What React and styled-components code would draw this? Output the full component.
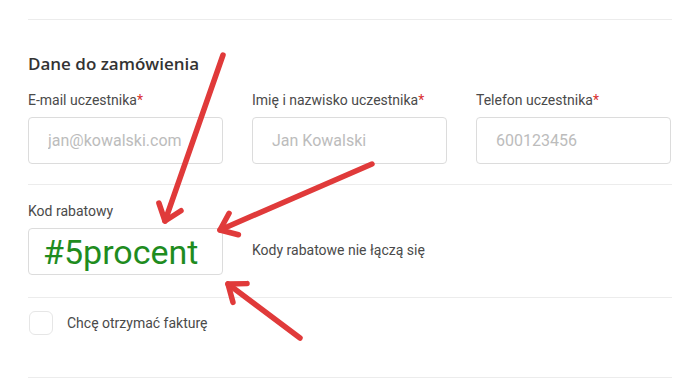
import React from "react";
import styled, { createGlobalStyle } from "styled-components";

const Global = createGlobalStyle`
  html, body { margin: 0; padding: 0; background: #fff; }
  body { font-family: Roboto, "Liberation Sans", sans-serif; color: #444; }
  * { box-sizing: border-box; }
`;

const Page = styled.div`
  position: relative;
  width: 700px;
  height: 390px;
  overflow: hidden;
  padding: 19px 28px 0 28px;
`;

const Divider = styled.div`
  height: 1px;
  background: #ececec;
  width: 644px;
`;

const Heading = styled.h2`
  margin: 33px 0 0 0;
  font-family: "Open Sans", "Liberation Sans", sans-serif;
  font-weight: 600;
  font-size: 17px;
  line-height: 22px;
  color: #333;
`;

const FieldGrid = styled.div`
  display: grid;
  grid-template-columns: repeat(3, 195px);
  column-gap: 29px;
  margin-top: 16px;
  margin-bottom: 20px;
`;

const Field = styled.div`
  display: flex;
  flex-direction: column;
`;

const Label = styled.label`
  font-size: 14px;
  line-height: 18px;
  color: #4a4a4a;
  margin-bottom: 8px;
`;

const Req = styled.span`
  color: #d9302f;
`;

const Input = styled.input`
  width: 195px;
  height: 47px;
  border: 1px solid #dcdcdc;
  border-radius: 4px;
  padding: ${(p) => (p.$big ? "0 0 0 14px" : "0 19px")};
  font-family: Roboto, "Liberation Sans", sans-serif;
  font-size: ${(p) => (p.$big ? "34px" : "16px")};
  color: ${(p) => (p.$big ? "#1f8c1f" : "#444")};
  background: #fff;
  outline: none;
  &::placeholder { color: #bcbcbc; }
`;

const DiscountSection = styled.div`
  margin-top: 17px;
  margin-bottom: 22px;
  display: flex;
  flex-direction: column;
`;

const DiscountRow = styled.div`
  display: flex;
  align-items: center;
  gap: 29px;
`;

const Note = styled.span`
  font-size: 14px;
  color: #4a4a4a;
  margin-top: -4px;
`;

const CheckRow = styled.label`
  display: flex;
  align-items: flex-start;
  gap: 14px;
  padding-top: 13px;
  height: 79px;
`;

const Box = styled.span`
  width: 24px;
  height: 24px;
  margin-left: 1px;
  border: 1px solid #e6e6e6;
  border-radius: 6px;
  background: #fff;
`;

const CheckText = styled.span`
  font-size: 14px;
  line-height: 24px;
  color: #4a4a4a;
`;

const Overlay = styled.svg`
  position: absolute;
  left: 0;
  top: 0;
  pointer-events: none;
`;

function Arrow({ x1, y1, x2, y2, len = 19, ang = 38 }) {
  const a = Math.atan2(y1 - y2, x1 - x2);
  const r = (ang * Math.PI) / 180;
  const p1 = [x2 + len * Math.cos(a + r), y2 + len * Math.sin(a + r)];
  const p2 = [x2 + len * Math.cos(a - r), y2 + len * Math.sin(a - r)];
  return (
    <g stroke="#e03a3a" strokeWidth="5.5" strokeLinecap="round" strokeLinejoin="round" fill="none">
      <line x1={x1} y1={y1} x2={x2} y2={y2} />
      <polyline points={`${p1[0]},${p1[1]} ${x2},${y2} ${p2[0]},${p2[1]}`} />
    </g>
  );
}

export default function App() {
  return (
    <>
      <Global />
      <Page>
        <Divider />
        <Heading>Dane do zamówienia</Heading>
        <FieldGrid>
          <Field>
            <Label>E-mail uczestnika<Req>*</Req></Label>
            <Input placeholder="jan@kowalski.com" />
          </Field>
          <Field>
            <Label>Imię i nazwisko uczestnika<Req>*</Req></Label>
            <Input placeholder="Jan Kowalski" />
          </Field>
          <Field>
            <Label>Telefon uczestnika<Req>*</Req></Label>
            <Input placeholder="600123456" />
          </Field>
        </FieldGrid>
        <Divider />
        <DiscountSection>
          <Label>Kod rabatowy</Label>
          <DiscountRow>
            <Input $big readOnly defaultValue="#5procent" />
            <Note>Kody rabatowe nie łączą się</Note>
          </DiscountRow>
        </DiscountSection>
        <Divider />
        <CheckRow>
          <Box />
          <CheckText>Chcę otrzymać fakturę</CheckText>
        </CheckRow>
        <Divider />
        <Overlay width="700" height="390" viewBox="0 0 700 390">
          <Arrow x1={223} y1={55} x2={165} y2={221} />
          <Arrow x1={372} y1={164} x2={220} y2={230} />
          <Arrow x1={300} y1={338} x2={228} y2={284} />
        </Overlay>
      </Page>
    </>
  );
}
